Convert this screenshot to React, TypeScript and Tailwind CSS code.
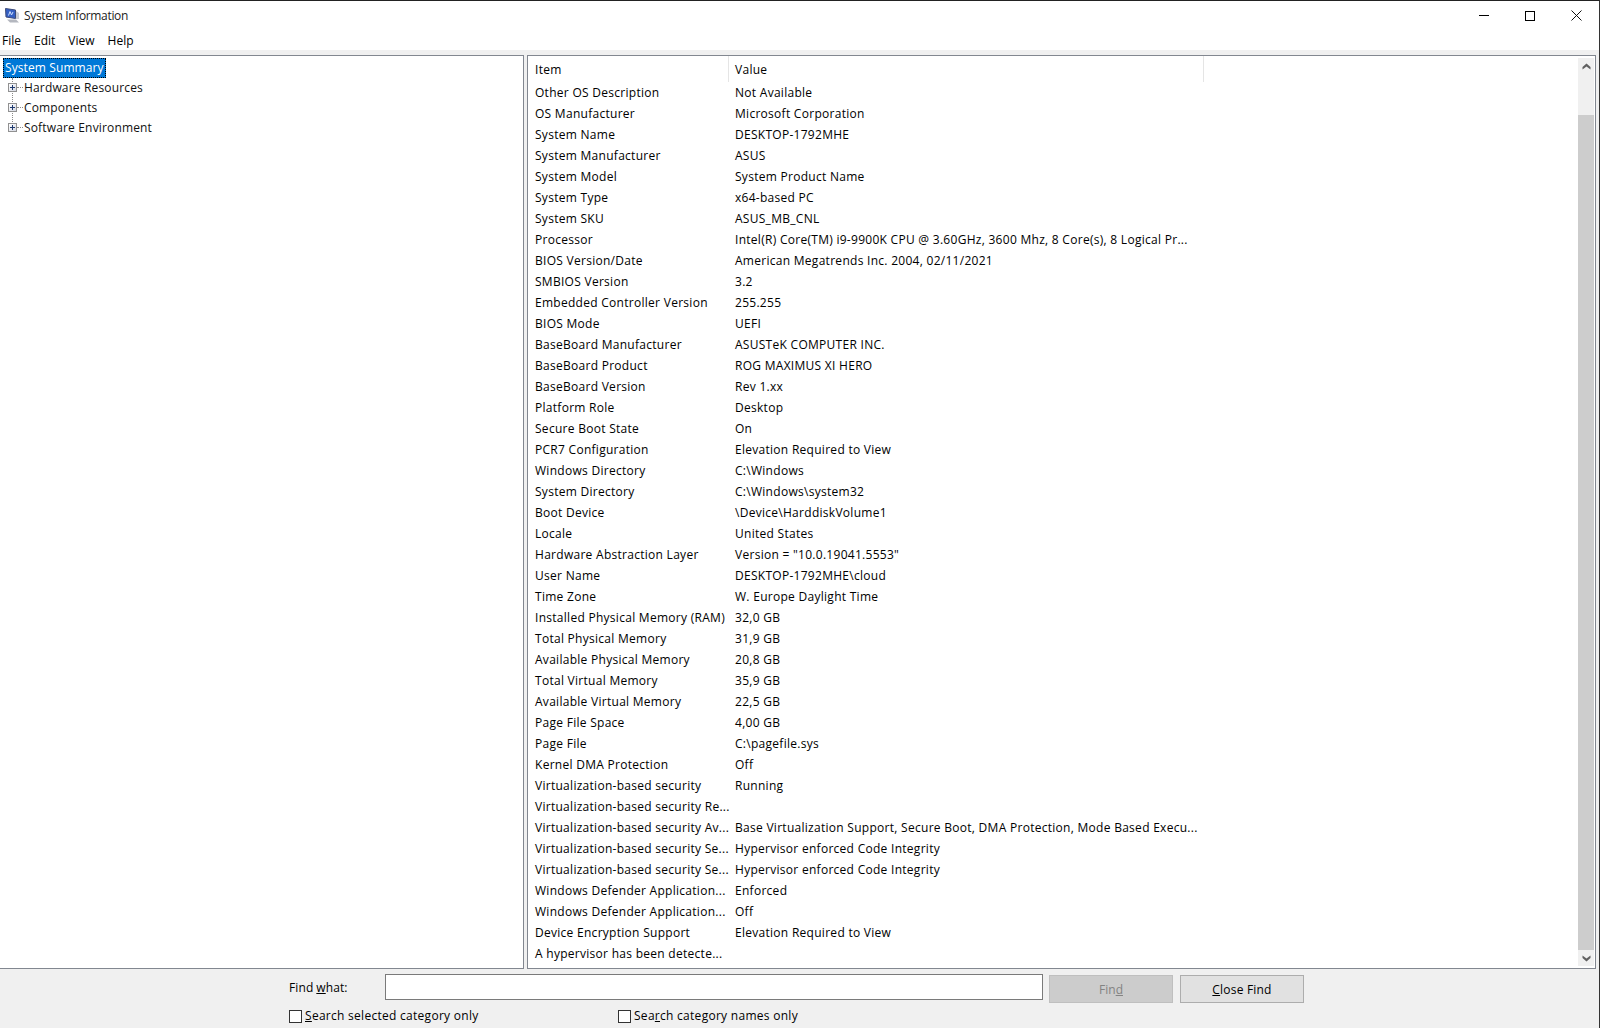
import React from "react";

const FONT = "font-['Open_Sans','Noto_Sans',sans-serif]";

const rows: [string, string][] = [
  ["Other OS Description", "Not Available"],
  ["OS Manufacturer", "Microsoft Corporation"],
  ["System Name", "DESKTOP-1792MHE"],
  ["System Manufacturer", "ASUS"],
  ["System Model", "System Product Name"],
  ["System Type", "x64-based PC"],
  ["System SKU", "ASUS_MB_CNL"],
  ["Processor", "Intel(R) Core(TM) i9-9900K CPU @ 3.60GHz, 3600 Mhz, 8 Core(s), 8 Logical Pr..."],
  ["BIOS Version/Date", "American Megatrends Inc. 2004, 02/11/2021"],
  ["SMBIOS Version", "3.2"],
  ["Embedded Controller Version", "255.255"],
  ["BIOS Mode", "UEFI"],
  ["BaseBoard Manufacturer", "ASUSTeK COMPUTER INC."],
  ["BaseBoard Product", "ROG MAXIMUS XI HERO"],
  ["BaseBoard Version", "Rev 1.xx"],
  ["Platform Role", "Desktop"],
  ["Secure Boot State", "On"],
  ["PCR7 Configuration", "Elevation Required to View"],
  ["Windows Directory", "C:\\Windows"],
  ["System Directory", "C:\\Windows\\system32"],
  ["Boot Device", "\\Device\\HarddiskVolume1"],
  ["Locale", "United States"],
  ["Hardware Abstraction Layer", 'Version = "10.0.19041.5553"'],
  ["User Name", "DESKTOP-1792MHE\\cloud"],
  ["Time Zone", "W. Europe Daylight Time"],
  ["Installed Physical Memory (RAM)", "32,0 GB"],
  ["Total Physical Memory", "31,9 GB"],
  ["Available Physical Memory", "20,8 GB"],
  ["Total Virtual Memory", "35,9 GB"],
  ["Available Virtual Memory", "22,5 GB"],
  ["Page File Space", "4,00 GB"],
  ["Page File", "C:\\pagefile.sys"],
  ["Kernel DMA Protection", "Off"],
  ["Virtualization-based security", "Running"],
  ["Virtualization-based security Re...", ""],
  ["Virtualization-based security Av...", "Base Virtualization Support, Secure Boot, DMA Protection, Mode Based Execu..."],
  ["Virtualization-based security Se...", "Hypervisor enforced Code Integrity"],
  ["Virtualization-based security Se...", "Hypervisor enforced Code Integrity"],
  ["Windows Defender Application...", "Enforced"],
  ["Windows Defender Application...", "Off"],
  ["Device Encryption Support", "Elevation Required to View"],
  ["A hypervisor has been detecte...", ""],
];

const AppIcon = () => (
  <svg width="16" height="16" viewBox="0 0 16 16" className="shrink-0">
    <path d="M1.5 0.5 L11.5 2 V10.5 L2 9 Z" fill="#3560c4" stroke="#3c4a78" strokeWidth="1" />
    <path d="M4.5 7.5 L6 3.5 L7.5 7 L9 4" fill="none" stroke="#cfe0ff" strokeWidth="1" />
    <path d="M12 3 L15 5 V11 L12 11 Z" fill="#c9ccd3" />
    <path d="M3 11.5 H12 L15 14.5 H6 Z" fill="#b4b7bf" />
  </svg>
);

const Expander = () => (
  <span className="relative z-10 flex w-[9px] h-[9px] border border-[#919191] bg-linear-to-br from-white to-[#d5d9e4] shrink-0">
    <span className="absolute left-[1px] top-[3px] w-[5px] h-[1px] bg-[#1f3a6e]" />
    <span className="absolute left-[3px] top-[1px] w-[1px] h-[5px] bg-[#1f3a6e]" />
  </span>
);

const TreeItem = ({ label }: { label: string }) => (
  <div className="flex items-center h-5 pl-[8px] pb-[1px]">
    <Expander />
    <span className="w-[6px] border-t border-dotted border-[#8a8a8a]" />
    <span className="text-[#111] ml-[1px] tracking-[0.16px]">{label}</span>
  </div>
);

const Check = ({ children }: { children: React.ReactNode }) => (
  <div className="flex items-center gap-[3px]">
    <span className="w-[13px] h-[13px] border border-[#333] bg-white shrink-0" />
    <span className="tracking-[0.28px]">{children}</span>
  </div>
);

export default function App() {
  return (
    <div className={`${FONT} w-[1600px] h-[1028px] overflow-hidden flex flex-col bg-[#f0f0f0] text-[12px] text-black border-t border-t-[#222] border-r border-r-[#333] relative`}>
      <div className="absolute left-[680px] top-[-1px] w-[48px] h-[1px] bg-[#0078d7]" />

      {/* Title bar */}
      <div className="h-[29px] bg-white flex items-center shrink-0">
        <div className="pl-[4px] pr-[4px] flex"><AppIcon /></div>
        <span className="text-[#222] tracking-[-0.34px]">System Information</span>
        <div className="ml-auto flex items-center gap-[36px] pr-[17px]">
          <span className="w-[10px] h-[1px] bg-black" />
          <span className="w-[10px] h-[10px] border border-black" />
          <svg width="11" height="11" viewBox="0 0 11 11">
            <path d="M0.5 0.5 L10.5 10.5 M10.5 0.5 L0.5 10.5" stroke="#111" strokeWidth="1" />
          </svg>
        </div>
      </div>

      {/* Menu */}
      <div className="h-[20px] pt-[2px] bg-white flex items-center shrink-0 pl-[2px] gap-[13px]">
        <span>File</span>
        <span>Edit</span>
        <span>View</span>
        <span>Help</span>
      </div>

      <div className="h-[5px] shrink-0" />

      {/* Panes */}
      <div className="flex h-[914px] shrink-0 gap-[3px]">
        <div className="w-[524px] shrink-0 bg-white border-t border-r border-b border-[#828790] pt-[2px] pl-[3px]">
          <div className="w-[103px] h-5 bg-[#0078d7] text-white border border-dotted border-black flex items-center pl-[1px] tracking-[0.1px] whitespace-nowrap">
            System Summary
          </div>
          <div className="-ml-[3px] relative">
            <span className="absolute left-[12px] top-0 h-[50px] border-l border-dotted border-[#8a8a8a]" />
            <TreeItem label="Hardware Resources" />
            <TreeItem label="Components" />
            <TreeItem label="Software Environment" />
          </div>
        </div>

        <div className="flex-1 min-w-0 mr-[3px] bg-white border-t border-l border-r border-b border-[#828790] flex">
          <div className="flex-1 min-w-0 tracking-[0.28px]">
            <div className="flex h-[26px] items-center">
              <div className="w-[201px] h-full flex items-center pl-[7px] pt-[2px] border-r border-[#e5e5e5]">Item</div>
              <div className="w-[475px] h-full flex items-center pl-[6px] pt-[2px] border-r border-[#e5e5e5]">Value</div>
            </div>
            {rows.map(([item, value], i) => (
              <div key={i} className="flex h-[21px] items-center">
                <div className="w-[201px] pl-[7px] whitespace-nowrap">{item}</div>
                <div className="pl-[6px] whitespace-nowrap">{value}</div>
              </div>
            ))}
          </div>

          {/* Scrollbar */}
          <div className="w-[16px] shrink-0 my-[2px] mr-[1px] bg-[#f0f0f0] flex flex-col">
            <div className="h-[16px] flex items-center justify-center">
              <svg width="9" height="7" viewBox="0 0 9 7"><path d="M0.5 4 L4.5 0.5 L8.5 4 L8.5 6.5 L4.5 3.5 L0.5 6.5 Z" fill="#606060" /></svg>
            </div>
            <div className="h-[41px]" />
            <div className="flex-1 bg-[#cdcdcd]" />
            <div className="h-[16px] flex items-center justify-center">
              <svg width="9" height="7" viewBox="0 0 9 7"><path d="M0.5 3 L4.5 6.5 L8.5 3 L8.5 0.5 L4.5 3.5 L0.5 0.5 Z" fill="#606060" /></svg>
            </div>
          </div>
        </div>
      </div>

      {/* Find bar */}
      <div className="flex-1 relative pl-[289px] pt-[5px]">
        <div className="flex items-start">
          <span className="w-[96px] h-[26px] pt-[1px] flex items-center tracking-[0.1px]">Find <u className="ml-[3px]">w</u>hat:</span>
          <div className="w-[658px] h-[26px] bg-white border border-[#7a7a7a]" />
          <div className="ml-[6px] mt-[1px] w-[124px] h-[28px] pt-[1px] bg-[#cccccc] border border-[#bfbfbf] flex items-center justify-center text-[#838383]"><span>Fin<u>d</u></span></div>
          <div className="ml-[7px] mt-[1px] w-[124px] h-[28px] pt-[1px] bg-[#e1e1e1] border border-[#adadad] flex items-center justify-center"><span className="tracking-[0.2px]"><u>C</u>lose Find</span></div>
        </div>
        <div className="flex mt-[4px]">
          <div className="w-[329px]"><Check><u>S</u>earch selected category only</Check></div>
          <Check>Sea<u>r</u>ch category names only</Check>
        </div>
      </div>
    </div>
  );
}
